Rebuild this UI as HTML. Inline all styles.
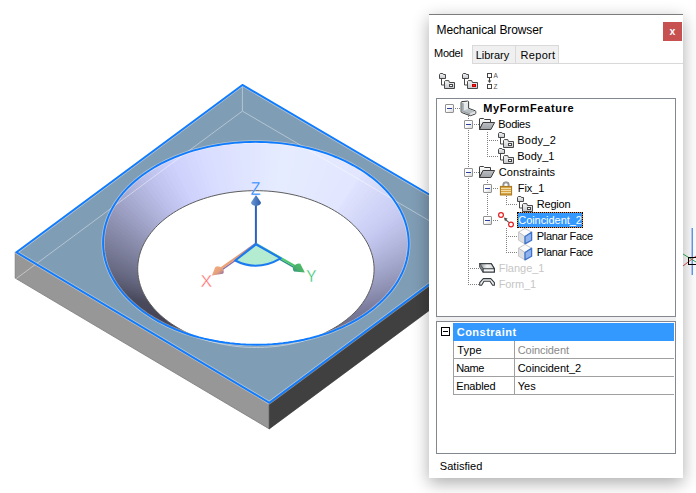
<!DOCTYPE html>
<html><head><meta charset="utf-8"><title>Mechanical Browser</title>
<style>
html,body{margin:0;padding:0;background:#fff;}
body{width:696px;height:493px;position:relative;overflow:hidden;font-family:"Liberation Sans",sans-serif;}
.scene{position:absolute;left:0;top:0;}
.panel{position:absolute;left:429px;top:14px;width:254px;height:464px;background:#fff;box-shadow:0 5px 16px rgba(0,0,0,0.33);border-top:1px solid #7c7c7c;box-sizing:border-box;}
.ui{position:absolute;left:0;top:0;width:696px;height:493px;}
.ui *{position:absolute;box-sizing:border-box;}
.t{white-space:nowrap;color:#000;line-height:16px;height:16px;font-size:11px;}
.t12{font-size:12px;}
.t.b{font-weight:bold;}
.t.w{color:#fff;}
.t.dis{color:#c6c6c6;}
.t.gr{color:#8a8a8a;}
.close{left:663px;top:22px;width:19px;height:19px;background:#c75050;color:#fff;font-weight:bold;font-size:10.5px;line-height:19px;text-align:center;}
.tabline{left:472px;top:63px;width:211px;height:1px;background:#d9d9d9;}
.tab{top:45px;height:19px;background:#f0f0f0;border:1px solid #d9d9d9;}
.treebox{left:436px;top:98px;width:240px;height:219px;border:1px solid #828790;background:#fff;}
.split{left:436px;top:317px;width:240px;height:4px;background:#f0f0f0;}
.propbox{left:436px;top:321px;width:240px;height:133px;border:1px solid #828790;background:#fff;}
.pm{width:9px;height:9px;border:1px solid #919191;background:linear-gradient(135deg,#fff 0%,#fff 40%,#d8d8d8 100%);border-radius:1px;}
.pm i{left:1px;top:3px;width:5px;height:1px;background:#2a3fa0;}
.dh{height:1px;background:repeating-linear-gradient(90deg,#808080 0,#808080 1px,transparent 1px,transparent 2px);}
.dv{width:1px;background:repeating-linear-gradient(180deg,#808080 0,#808080 1px,transparent 1px,transparent 2px);}
.ic{line-height:0;}
.ic svg{position:static;display:block;overflow:visible;}
.selbg{left:517px;top:212px;width:66px;height:16px;background:#3399ff;box-shadow:inset 0 0 0 1px #e0913a;outline:1px dotted #000;outline-offset:-1px;}
.hdrbg{left:453px;top:323px;width:221px;height:18px;background:#3399ff;}
.pbox{left:441px;top:327px;width:9px;height:9px;border:1px solid #000;background:#fff;}
.pbox i{left:1px;top:3px;width:5px;height:1px;background:#000;}
.hl{height:1px;background:#a0a0a0;left:453px;width:221px;}
.vl{width:1px;background:#a0a0a0;top:341px;height:54px;}
</style></head><body>
<svg class="scene" width="696" height="493" viewBox="0 0 696 493">
<defs><clipPath id="co"><path d="M357.74 167.87 L361.65 170.28 L365.44 172.78 L369.09 175.37 L372.60 178.04 L375.98 180.78 L379.20 183.61 L382.28 186.51 L385.20 189.47 L387.97 192.50 L390.57 195.60 L393.01 198.75 L395.28 201.96 L397.38 205.21 L399.31 208.52 L401.07 211.86 L402.65 215.24 L404.05 218.66 L405.27 222.11 L406.31 225.58 L407.16 229.08 L407.83 232.59 L408.32 236.12 L408.61 239.65 L408.73 243.19 L408.65 246.73 L408.40 250.26 L407.95 253.79 L407.32 257.30 L406.51 260.80 L405.51 264.28 L404.33 267.73 L402.97 271.14 L401.42 274.53 L399.71 277.88 L397.81 281.18 L395.75 284.44 L393.51 287.65 L391.11 290.81 L388.54 293.91 L385.81 296.94 L382.92 299.91 L379.88 302.81 L376.68 305.64 L373.34 308.40 L369.86 311.07 L366.23 313.66 L362.48 316.17 L358.59 318.58 L354.57 320.91 L350.44 323.14 L346.19 325.27 L341.84 327.31 L337.37 329.24 L332.81 331.06 L328.15 332.78 L323.41 334.39 L318.58 335.89 L313.68 337.28 L308.71 338.55 L303.67 339.71 L298.58 340.74 L293.43 341.66 L288.24 342.46 L283.00 343.14 L277.74 343.70 L272.45 344.14 L267.13 344.45 L261.81 344.64 L256.47 344.70 L251.14 344.64 L245.81 344.46 L240.50 344.16 L235.20 343.73 L229.93 343.18 L224.69 342.51 L219.48 341.72 L214.33 340.80 L209.22 339.77 L204.17 338.63 L199.18 337.36 L194.26 335.98 L189.42 334.49 L184.66 332.88 L179.98 331.17 L175.40 329.35 L170.92 327.43 L166.53 325.40 L162.26 323.27 L158.10 321.05 L154.06 318.73 L150.15 316.32 L146.36 313.82 L142.71 311.23 L139.20 308.56 L135.82 305.82 L132.60 302.99 L129.52 300.09 L126.60 297.13 L123.83 294.10 L121.23 291.00 L118.79 287.85 L116.52 284.64 L114.42 281.39 L112.49 278.08 L110.73 274.74 L109.15 271.36 L107.75 267.94 L106.53 264.49 L105.49 261.02 L104.64 257.52 L103.97 254.01 L103.48 250.48 L103.19 246.95 L103.07 243.41 L103.15 239.87 L103.40 236.34 L103.85 232.81 L104.48 229.30 L105.29 225.80 L106.29 222.32 L107.47 218.87 L108.83 215.46 L110.38 212.07 L112.09 208.72 L113.99 205.42 L116.05 202.16 L118.29 198.95 L120.69 195.79 L123.26 192.69 L125.99 189.66 L128.88 186.69 L131.92 183.79 L135.12 180.96 L138.46 178.20 L141.94 175.53 L145.57 172.94 L149.32 170.43 L153.21 168.02 L157.23 165.69 L161.36 163.46 L165.61 161.33 L169.96 159.29 L174.43 157.36 L178.99 155.54 L183.65 153.82 L188.39 152.21 L193.22 150.71 L198.12 149.32 L203.09 148.05 L208.13 146.89 L213.22 145.86 L218.37 144.94 L223.56 144.14 L228.80 143.46 L234.06 142.90 L239.35 142.46 L244.67 142.15 L249.99 141.96 L255.33 141.90 L260.66 141.96 L265.99 142.14 L271.30 142.44 L276.60 142.87 L281.87 143.42 L287.11 144.09 L292.32 144.88 L297.47 145.80 L302.58 146.83 L307.63 147.97 L312.62 149.24 L317.54 150.62 L322.38 152.11 L327.14 153.72 L331.82 155.43 L336.40 157.25 L340.88 159.17 L345.27 161.20 L349.54 163.33 L353.70 165.55Z"/></clipPath>
<linearGradient id="gx" gradientUnits="userSpaceOnUse" x1="256" y1="244" x2="218" y2="272"><stop offset="0" stop-color="#7a78c0"/><stop offset="0.4" stop-color="#e09878"/><stop offset="1" stop-color="#f4a874"/></linearGradient>
<linearGradient id="gy" gradientUnits="userSpaceOnUse" x1="256" y1="244" x2="302" y2="271"><stop offset="0" stop-color="#40a8c0"/><stop offset="0.4" stop-color="#50cc70"/><stop offset="1" stop-color="#48c068"/></linearGradient>
<linearGradient id="gz" x1="0" y1="0" x2="1" y2="0"><stop offset="0" stop-color="#6a9ad8"/><stop offset="1" stop-color="#2c5ca8"/></linearGradient>
<linearGradient id="gxa" x1="0" y1="0" x2="1" y2="1"><stop offset="0" stop-color="#f6b080"/><stop offset="0.55" stop-color="#e8a07c"/><stop offset="1" stop-color="#7868b0"/></linearGradient>
<linearGradient id="gya" x1="1" y1="0" x2="0" y2="1"><stop offset="0" stop-color="#58c070"/><stop offset="0.6" stop-color="#48b068"/><stop offset="1" stop-color="#2a8a88"/></linearGradient>
</defs>
<polygon points="15.20,251.90 269.30,402.70 269.30,428.90 15.20,278.10" fill="#979797" stroke="#787878" stroke-width="0.8" stroke-linejoin="round"/>
<polygon points="269.30,402.70 496.90,234.20 496.90,260.40 269.30,428.90" fill="#404040" stroke="#383838" stroke-width="0.6" stroke-linejoin="round"/>
<line x1="16.40" y1="278.50" x2="242.40" y2="111.10" stroke="#c4c4c4" stroke-width="1"/>
<polygon points="16.40,252.30 242.40,84.90 496.90,234.20 269.30,402.70" fill="#7f9db5"/>
<g clip-path="url(#top)">
</g>
<clipPath id="top"><polygon points="16.40,252.30 242.40,84.90 496.90,234.20 269.30,402.70"/></clipPath>
<g clip-path="url(#top)"><path d="M16.40 278.50 L242.40 111.10 L496.90 260.40 M242.40 84.90 L242.40 111.10" stroke="#b4c4d2" stroke-width="1" fill="none"/></g>
<path d="M334.66 210.76 L337.69 212.63 L340.62 214.56 L343.44 216.56 L346.16 218.62 L348.77 220.75 L351.26 222.93 L353.64 225.17 L355.90 227.47 L358.04 229.81 L360.06 232.21 L361.94 234.64 L363.70 237.12 L365.33 239.64 L366.82 242.20 L368.18 244.78 L369.40 247.40 L370.48 250.04 L371.42 252.71 L372.23 255.40 L372.89 258.10 L373.41 260.82 L373.78 263.54 L374.01 266.28 L374.10 269.02 L374.04 271.75 L373.84 274.49 L373.50 277.21 L373.01 279.93 L372.38 282.64 L371.61 285.32 L370.70 287.99 L369.64 290.64 L368.45 293.25 L367.12 295.84 L365.66 298.40 L364.06 300.92 L362.33 303.40 L360.47 305.84 L358.49 308.24 L356.37 310.59 L354.14 312.89 L351.79 315.13 L349.32 317.32 L346.73 319.45 L344.04 321.51 L341.23 323.52 L338.33 325.46 L335.32 327.33 L332.22 329.12 L329.02 330.85 L325.73 332.50 L322.36 334.07 L318.91 335.56 L315.38 336.98 L311.78 338.31 L308.11 339.55 L304.38 340.71 L300.59 341.78 L296.74 342.77 L292.85 343.66 L288.91 344.46 L284.93 345.18 L280.91 345.79 L276.86 346.32 L272.79 346.75 L268.70 347.09 L264.59 347.33 L260.47 347.48 L256.34 347.53 L252.22 347.48 L248.10 347.34 L243.99 347.11 L239.89 346.77 L235.81 346.35 L231.76 345.83 L227.74 345.22 L223.75 344.51 L219.80 343.71 L215.89 342.83 L212.03 341.85 L208.23 340.78 L204.48 339.63 L200.80 338.39 L197.18 337.06 L193.64 335.65 L190.17 334.17 L186.78 332.60 L183.48 330.95 L180.26 329.23 L177.14 327.44 L174.11 325.57 L171.18 323.64 L168.36 321.64 L165.64 319.58 L163.03 317.45 L160.54 315.27 L158.16 313.03 L155.90 310.73 L153.76 308.39 L151.74 305.99 L149.86 303.56 L148.10 301.08 L146.47 298.56 L144.98 296.00 L143.62 293.42 L142.40 290.80 L141.32 288.16 L140.38 285.49 L139.57 282.80 L138.91 280.10 L138.39 277.38 L138.02 274.66 L137.79 271.92 L137.70 269.18 L137.76 266.45 L137.96 263.71 L138.30 260.99 L138.79 258.27 L139.42 255.56 L140.19 252.88 L141.10 250.21 L142.16 247.56 L143.35 244.95 L144.68 242.36 L146.14 239.80 L147.74 237.28 L149.47 234.80 L151.33 232.36 L153.31 229.96 L155.43 227.61 L157.66 225.31 L160.01 223.07 L162.48 220.88 L165.07 218.75 L167.76 216.69 L170.57 214.68 L173.47 212.74 L176.48 210.87 L179.58 209.08 L182.78 207.35 L186.07 205.70 L189.44 204.13 L192.89 202.64 L196.42 201.22 L200.02 199.89 L203.69 198.65 L207.42 197.49 L211.21 196.42 L215.06 195.43 L218.95 194.54 L222.89 193.74 L226.87 193.02 L230.89 192.41 L234.94 191.88 L239.01 191.45 L243.10 191.11 L247.21 190.87 L251.33 190.72 L255.46 190.67 L259.58 190.72 L263.70 190.86 L267.81 191.09 L271.91 191.43 L275.99 191.85 L280.04 192.37 L284.06 192.98 L288.05 193.69 L292.00 194.49 L295.91 195.37 L299.77 196.35 L303.57 197.42 L307.32 198.57 L311.00 199.81 L314.62 201.14 L318.16 202.55 L321.63 204.03 L325.02 205.60 L328.32 207.25 L331.54 208.97Z" fill="none" stroke="#b9c9d6" stroke-width="1"/>
<g clip-path="url(#co)" shape-rendering="geometricPrecision"><polygon points="357.74,167.87 367.28,174.06 333.43,220.91 326.78,216.59" fill="rgb(225,229,255)"/><polygon points="361.65,170.28 370.86,176.69 335.92,222.74 329.51,218.27" fill="rgb(223,227,254)"/><polygon points="365.44,172.78 374.31,179.40 338.32,224.62 332.15,220.01" fill="rgb(221,225,253)"/><polygon points="369.09,175.37 377.61,182.19 340.62,226.56 334.69,221.81" fill="rgb(219,223,252)"/><polygon points="372.60,178.04 380.76,185.05 342.81,228.55 337.13,223.67" fill="rgb(218,222,251)"/><polygon points="375.98,180.78 383.76,187.98 344.90,230.59 339.48,225.58" fill="rgb(216,220,250)"/><polygon points="379.20,183.61 386.60,190.98 346.88,232.68 341.73,227.55" fill="rgb(214,218,249)"/><polygon points="382.28,186.51 389.29,194.04 348.75,234.81 343.87,229.57" fill="rgb(212,216,248)"/><polygon points="385.20,189.47 391.81,197.17 350.50,236.99 345.90,231.63" fill="rgb(210,214,248)"/><polygon points="387.97,192.50 394.17,200.35 352.14,239.20 347.83,233.74" fill="rgb(208,212,247)"/><polygon points="390.57,195.60 396.35,203.58 353.67,241.45 349.64,235.90" fill="rgb(206,210,246)"/><polygon points="393.01,198.75 398.37,206.86 355.07,243.73 351.34,238.09" fill="rgb(205,209,245)"/><polygon points="395.28,201.96 400.21,210.18 356.35,246.05 352.92,240.32" fill="rgb(203,207,244)"/><polygon points="397.38,205.21 401.88,213.55 357.51,248.39 354.38,242.59" fill="rgb(201,205,243)"/><polygon points="399.31,208.52 403.37,216.95 358.55,250.76 355.73,244.89" fill="rgb(199,203,242)"/><polygon points="401.07,211.86 404.68,220.38 359.46,253.15 356.95,247.22" fill="rgb(197,201,241)"/><polygon points="402.65,215.24 405.81,223.84 360.25,255.56 358.05,249.57" fill="rgb(194,198,238)"/><polygon points="404.05,218.66 406.76,227.33 360.91,257.98 359.02,251.95" fill="rgb(191,195,235)"/><polygon points="405.27,222.11 407.52,230.83 361.44,260.42 359.87,254.35" fill="rgb(189,193,232)"/><polygon points="406.31,225.58 408.10,234.35 361.84,262.87 360.59,256.77" fill="rgb(186,190,229)"/><polygon points="407.16,229.08 408.49,237.88 362.11,265.33 361.19,259.20" fill="rgb(183,187,226)"/><polygon points="407.83,232.59 408.69,241.42 362.26,267.79 361.65,261.65" fill="rgb(181,185,223)"/><polygon points="408.32,236.12 408.71,244.96 362.27,270.26 361.99,264.10" fill="rgb(178,182,220)"/><polygon points="408.61,239.65 408.55,248.50 362.15,272.72 362.20,266.56" fill="rgb(175,179,217)"/><polygon points="408.73,243.19 408.20,252.03 361.91,275.18 362.28,269.02" fill="rgb(173,177,214)"/><polygon points="408.65,246.73 407.66,255.55 361.53,277.63 362.23,271.49" fill="rgb(170,174,211)"/><polygon points="408.40,250.26 406.94,259.05 361.03,280.07 362.05,273.95" fill="rgb(167,171,208)"/><polygon points="407.95,253.79 406.03,262.54 360.40,282.49 361.74,276.40" fill="rgb(165,169,205)"/><polygon points="407.32,257.30 404.94,266.00 359.64,284.90 361.30,278.85" fill="rgb(162,166,202)"/><polygon points="406.51,260.80 403.67,269.44 358.76,287.29 360.73,281.28" fill="rgb(159,163,199)"/><polygon points="405.51,264.28 402.22,272.84 357.75,289.66 360.04,283.70" fill="rgb(157,161,196)"/><polygon points="404.33,267.73 400.59,276.21 356.61,292.01 359.22,286.10" fill="rgb(154,158,193)"/><polygon points="402.97,271.14 398.78,279.54 355.36,294.32 358.27,288.48" fill="rgb(152,155,190)"/><polygon points="401.42,274.53 396.80,282.82 353.98,296.61 357.20,290.84" fill="rgb(149,152,187)"/><polygon points="399.71,277.88 394.65,286.06 352.48,298.86 356.00,293.17" fill="rgb(147,149,184)"/><polygon points="397.81,281.18 392.33,289.24 350.87,301.08 354.68,295.47" fill="rgb(144,147,181)"/><polygon points="395.75,284.44 389.84,292.37 349.13,303.25 353.24,297.74" fill="rgb(142,144,178)"/><polygon points="393.51,287.65 387.19,295.43 347.29,305.39 351.69,299.97" fill="rgb(139,141,175)"/><polygon points="391.11,290.81 384.38,298.44 345.33,307.48 350.01,302.17" fill="rgb(136,138,172)"/><polygon points="388.54,293.91 381.42,301.37 343.27,309.52 348.23,304.33" fill="rgb(134,135,169)"/><polygon points="385.81,296.94 378.30,304.24 341.10,311.52 346.33,306.44" fill="rgb(131,133,166)"/><polygon points="382.92,299.91 375.03,307.03 338.82,313.46 344.32,308.51" fill="rgb(129,130,163)"/><polygon points="379.88,302.81 371.62,309.74 336.45,315.35 342.20,310.53" fill="rgb(126,127,160)"/><polygon points="376.68,305.64 368.06,312.38 333.97,317.18 339.97,312.50" fill="rgb(124,124,157)"/><polygon points="373.34,308.40 364.37,314.93 331.40,318.96 337.65,314.41" fill="rgb(121,121,154)"/><polygon points="369.86,311.07 360.55,317.39 328.74,320.67 335.22,316.27" fill="rgb(119,119,151)"/><polygon points="366.23,313.66 356.60,319.76 325.99,322.32 332.70,318.08" fill="rgb(118,118,149)"/><polygon points="362.48,316.17 352.52,322.04 323.16,323.91 330.08,319.82" fill="rgb(116,116,147)"/><polygon points="358.59,318.58 348.33,324.22 320.24,325.42 327.38,321.50" fill="rgb(114,114,145)"/><polygon points="354.57,320.91 344.03,326.30 317.24,326.87 324.58,323.12" fill="rgb(113,113,143)"/><polygon points="350.44,323.14 339.62,328.28 314.17,328.25 321.71,324.67" fill="rgb(111,111,141)"/><polygon points="346.19,325.27 335.10,330.16 311.03,329.56 318.75,326.16" fill="rgb(110,110,139)"/><polygon points="341.84,327.31 330.49,331.94 307.82,330.80 315.72,327.57" fill="rgb(108,108,137)"/><polygon points="337.37,329.24 325.79,333.60 304.55,331.96 312.61,328.92" fill="rgb(106,106,135)"/><polygon points="332.81,331.06 321.01,335.16 301.22,333.04 309.44,330.19" fill="rgb(105,105,133)"/><polygon points="328.15,332.78 316.14,336.60 297.83,334.04 306.19,331.39" fill="rgb(103,103,131)"/><polygon points="323.41,334.39 311.20,337.93 294.40,334.97 302.89,332.51" fill="rgb(102,102,129)"/><polygon points="318.58,335.89 306.20,339.14 290.91,335.81 299.53,333.55" fill="rgb(100,100,127)"/><polygon points="313.68,337.28 301.13,340.24 287.38,336.58 296.12,334.52" fill="rgb(98,98,125)"/><polygon points="308.71,338.55 296.01,341.22 283.82,337.26 292.66,335.40" fill="rgb(97,97,123)"/><polygon points="303.67,339.71 290.84,342.08 280.22,337.86 289.15,336.21" fill="rgb(95,95,121)"/><polygon points="298.58,340.74 285.62,342.82 276.59,338.37 285.61,336.93" fill="rgb(94,94,120)"/><polygon points="293.43,341.66 280.37,343.44 272.94,338.80 282.02,337.57" fill="rgb(93,93,118)"/><polygon points="288.24,342.46 275.09,343.93 269.26,339.15 278.41,338.13" fill="rgb(92,92,117)"/><polygon points="283.00,343.14 269.79,344.31 265.57,339.41 274.77,338.60" fill="rgb(91,91,115)"/><polygon points="277.74,343.70 264.47,344.56 261.87,339.58 271.10,338.99" fill="rgb(90,90,114)"/><polygon points="272.45,344.14 259.14,344.69 258.16,339.67 267.42,339.29" fill="rgb(89,89,112)"/><polygon points="267.13,344.45 253.81,344.69 254.44,339.67 263.72,339.51" fill="rgb(88,88,111)"/><polygon points="261.81,344.64 248.47,344.57 250.73,339.59 260.01,339.64" fill="rgb(87,87,110)"/><polygon points="256.47,344.70 243.15,344.33 247.03,339.42 256.30,339.68" fill="rgb(86,86,108)"/><polygon points="251.14,344.64 237.84,343.96 243.33,339.17 252.59,339.64" fill="rgb(85,85,107)"/><polygon points="245.81,344.46 232.56,343.47 239.65,338.83 248.88,339.52" fill="rgb(84,84,105)"/><polygon points="240.50,344.16 227.30,342.86 235.99,338.40 245.18,339.31" fill="rgb(83,83,104)"/><polygon points="235.20,343.73 222.08,342.13 232.36,337.89 241.49,339.01" fill="rgb(82,82,102)"/><polygon points="229.93,343.18 216.90,341.28 228.75,337.30 237.82,338.62" fill="rgb(81,81,101)"/><polygon points="224.69,342.51 211.77,340.30 225.18,336.62 234.17,338.16" fill="rgb(80,80,100)"/><polygon points="219.48,341.72 206.69,339.21 221.64,335.86 230.55,337.61" fill="rgb(79,79,99)"/><polygon points="214.33,340.80 201.67,338.01 218.15,335.02 226.96,336.97" fill="rgb(78,78,98)"/><polygon points="209.22,339.77 196.71,336.68 214.70,334.10 223.41,336.25" fill="rgb(78,78,97)"/><polygon points="204.17,338.63 191.83,335.25 211.30,333.10 219.89,335.45" fill="rgb(77,77,96)"/><polygon points="199.18,337.36 187.03,333.70 207.96,332.03 216.42,334.57" fill="rgb(76,76,96)"/><polygon points="194.26,335.98 182.31,332.04 204.68,330.87 213.00,333.61" fill="rgb(76,76,95)"/><polygon points="189.42,334.49 177.68,330.28 201.45,329.64 209.63,332.57" fill="rgb(75,75,94)"/><polygon points="184.66,332.88 173.14,328.40 198.30,328.34 206.31,331.46" fill="rgb(74,74,93)"/><polygon points="179.98,331.17 168.71,326.43 195.21,326.96 203.06,330.27" fill="rgb(74,74,92)"/><polygon points="175.40,329.35 164.38,324.35 192.20,325.52 199.87,329.00" fill="rgb(73,73,92)"/><polygon points="170.92,327.43 160.17,322.17 189.26,324.00 196.74,327.66" fill="rgb(72,72,91)"/><polygon points="166.53,325.40 156.07,319.90 186.41,322.42 193.69,326.25" fill="rgb(72,72,90)"/><polygon points="162.26,323.27 152.09,317.54 183.64,320.77 190.72,324.77" fill="rgb(71,71,89)"/><polygon points="158.10,321.05 148.24,315.08 180.96,319.06 187.83,323.22" fill="rgb(70,70,88)"/><polygon points="154.06,318.73 144.52,312.54 178.37,317.29 185.02,321.61" fill="rgb(70,70,88)"/><polygon points="150.15,316.32 140.94,309.91 175.88,315.46 182.29,319.93" fill="rgb(71,71,89)"/><polygon points="146.36,313.82 137.49,307.20 173.48,313.58 179.65,318.19" fill="rgb(71,71,89)"/><polygon points="142.71,311.23 134.19,304.41 171.18,311.64 177.11,316.39" fill="rgb(72,72,90)"/><polygon points="139.20,308.56 131.04,301.55 168.99,309.65 174.67,314.53" fill="rgb(72,72,90)"/><polygon points="135.82,305.82 128.04,298.62 166.90,307.61 172.32,312.62" fill="rgb(73,73,91)"/><polygon points="132.60,302.99 125.20,295.62 164.92,305.52 170.07,310.65" fill="rgb(73,73,91)"/><polygon points="129.52,300.09 122.51,292.56 163.05,303.39 167.93,308.63" fill="rgb(74,74,92)"/><polygon points="126.60,297.13 119.99,289.43 161.30,301.21 165.90,306.57" fill="rgb(77,77,96)"/><polygon points="123.83,294.10 117.63,286.25 159.66,299.00 163.97,304.46" fill="rgb(80,81,101)"/><polygon points="121.23,291.00 115.45,283.02 158.13,296.75 162.16,302.30" fill="rgb(84,84,105)"/><polygon points="118.79,287.85 113.43,279.74 156.73,294.47 160.46,300.11" fill="rgb(87,88,109)"/><polygon points="116.52,284.64 111.59,276.42 155.45,292.15 158.88,297.88" fill="rgb(90,91,113)"/><polygon points="114.42,281.39 109.92,273.05 154.29,289.81 157.42,295.61" fill="rgb(93,95,118)"/><polygon points="112.49,278.08 108.43,269.65 153.25,287.44 156.07,293.31" fill="rgb(96,98,122)"/><polygon points="110.73,274.74 107.12,266.22 152.34,285.05 154.85,290.98" fill="rgb(99,101,126)"/><polygon points="109.15,271.36 105.99,262.76 151.55,282.64 153.75,288.63" fill="rgb(102,104,129)"/><polygon points="107.75,267.94 105.04,259.27 150.89,280.22 152.78,286.25" fill="rgb(105,107,132)"/><polygon points="106.53,264.49 104.28,255.77 150.36,277.78 151.93,283.85" fill="rgb(107,110,135)"/><polygon points="105.49,261.02 103.70,252.25 149.96,275.33 151.21,281.43" fill="rgb(110,112,138)"/><polygon points="104.64,257.52 103.31,248.72 149.69,272.87 150.61,279.00" fill="rgb(113,115,142)"/><polygon points="103.97,254.01 103.11,245.18 149.54,270.41 150.15,276.55" fill="rgb(115,118,145)"/><polygon points="103.48,250.48 103.09,241.64 149.53,267.94 149.81,274.10" fill="rgb(118,120,148)"/><polygon points="103.19,246.95 103.25,238.10 149.65,265.48 149.60,271.64" fill="rgb(121,123,151)"/><polygon points="103.07,243.41 103.60,234.57 149.89,263.02 149.52,269.18" fill="rgb(123,126,154)"/><polygon points="103.15,239.87 104.14,231.05 150.27,260.57 149.57,266.71" fill="rgb(126,129,158)"/><polygon points="103.40,236.34 104.86,227.55 150.77,258.13 149.75,264.25" fill="rgb(129,131,161)"/><polygon points="103.85,232.81 105.77,224.06 151.40,255.71 150.06,261.80" fill="rgb(131,134,164)"/><polygon points="104.48,229.30 106.86,220.60 152.16,253.30 150.50,259.35" fill="rgb(134,137,167)"/><polygon points="105.29,225.80 108.13,217.16 153.04,250.91 151.07,256.92" fill="rgb(137,140,170)"/><polygon points="106.29,222.32 109.58,213.76 154.05,248.54 151.76,254.50" fill="rgb(140,143,174)"/><polygon points="107.47,218.87 111.21,210.39 155.19,246.19 152.58,252.10" fill="rgb(143,146,178)"/><polygon points="108.83,215.46 113.02,207.06 156.44,243.88 153.53,249.72" fill="rgb(146,149,182)"/><polygon points="110.38,212.07 115.00,203.78 157.82,241.59 154.60,247.36" fill="rgb(149,152,186)"/><polygon points="112.09,208.72 117.15,200.54 159.32,239.34 155.80,245.03" fill="rgb(152,156,190)"/><polygon points="113.99,205.42 119.47,197.36 160.93,237.12 157.12,242.73" fill="rgb(156,159,194)"/><polygon points="116.05,202.16 121.96,194.23 162.67,234.95 158.56,240.46" fill="rgb(159,162,198)"/><polygon points="118.29,198.95 124.61,191.17 164.51,232.81 160.11,238.23" fill="rgb(162,166,202)"/><polygon points="120.69,195.79 127.42,188.16 166.47,230.72 161.79,236.03" fill="rgb(165,169,206)"/><polygon points="123.26,192.69 130.38,185.23 168.53,228.68 163.57,233.87" fill="rgb(168,172,210)"/><polygon points="125.99,189.66 133.50,182.36 170.70,226.68 165.47,231.76" fill="rgb(172,175,214)"/><polygon points="128.88,186.69 136.77,179.57 172.98,224.74 167.48,229.69" fill="rgb(175,179,218)"/><polygon points="131.92,183.79 140.18,176.86 175.35,222.85 169.60,227.67" fill="rgb(178,182,222)"/><polygon points="135.12,180.96 143.74,174.22 177.83,221.02 171.83,225.70" fill="rgb(181,185,226)"/><polygon points="138.46,178.20 147.43,171.67 180.40,219.24 174.15,223.79" fill="rgb(184,188,230)"/><polygon points="141.94,175.53 151.25,169.21 183.06,217.53 176.58,221.93" fill="rgb(187,191,233)"/><polygon points="145.57,172.94 155.20,166.84 185.81,215.88 179.10,220.12" fill="rgb(190,194,236)"/><polygon points="149.32,170.43 159.28,164.56 188.64,214.29 181.72,218.38" fill="rgb(193,197,239)"/><polygon points="153.21,168.02 163.47,162.38 191.56,212.78 184.42,216.70" fill="rgb(195,199,241)"/><polygon points="157.23,165.69 167.77,160.30 194.56,211.33 187.22,215.08" fill="rgb(198,202,244)"/><polygon points="161.36,163.46 172.18,158.32 197.63,209.95 190.09,213.53" fill="rgb(201,205,247)"/><polygon points="165.61,161.33 176.70,156.44 200.77,208.64 193.05,212.04" fill="rgb(203,207,249)"/><polygon points="169.96,159.29 181.31,154.66 203.98,207.40 196.08,210.63" fill="rgb(206,210,252)"/><polygon points="174.43,157.36 186.01,153.00 207.25,206.24 199.19,209.28" fill="rgb(208,212,252)"/><polygon points="178.99,155.54 190.79,151.44 210.58,205.16 202.36,208.01" fill="rgb(209,213,253)"/><polygon points="183.65,153.82 195.66,150.00 213.97,204.16 205.61,206.81" fill="rgb(211,215,253)"/><polygon points="188.39,152.21 200.60,148.67 217.40,203.23 208.91,205.69" fill="rgb(212,216,254)"/><polygon points="193.22,150.71 205.60,147.46 220.89,202.39 212.27,204.65" fill="rgb(214,218,254)"/><polygon points="198.12,149.32 210.67,146.36 224.42,201.62 215.68,203.68" fill="rgb(216,220,254)"/><polygon points="203.09,148.05 215.79,145.38 227.98,200.94 219.14,202.80" fill="rgb(217,221,255)"/><polygon points="208.13,146.89 220.96,144.52 231.58,200.34 222.65,201.99" fill="rgb(218,222,255)"/><polygon points="213.22,145.86 226.18,143.78 235.21,199.83 226.19,201.27" fill="rgb(219,223,255)"/><polygon points="218.37,144.94 231.43,143.16 238.86,199.40 229.78,200.63" fill="rgb(220,224,255)"/><polygon points="223.56,144.14 236.71,142.67 242.54,199.05 233.39,200.07" fill="rgb(221,225,255)"/><polygon points="228.80,143.46 242.01,142.29 246.23,198.79 237.03,199.60" fill="rgb(222,226,255)"/><polygon points="234.06,142.90 247.33,142.04 249.93,198.62 240.70,199.21" fill="rgb(222,227,255)"/><polygon points="239.35,142.46 252.66,141.91 253.64,198.53 244.38,198.91" fill="rgb(223,228,255)"/><polygon points="244.67,142.15 257.99,141.91 257.36,198.53 248.08,198.69" fill="rgb(224,229,255)"/><polygon points="249.99,141.96 263.33,142.03 261.07,198.61 251.79,198.56" fill="rgb(225,230,255)"/><polygon points="255.33,141.90 268.65,142.27 264.77,198.78 255.50,198.52" fill="rgb(226,231,255)"/><polygon points="260.66,141.96 273.96,142.64 268.47,199.03 259.21,198.56" fill="rgb(226,232,255)"/><polygon points="265.99,142.14 279.24,143.13 272.15,199.37 262.92,198.68" fill="rgb(227,233,255)"/><polygon points="271.30,142.44 284.50,143.74 275.81,199.80 266.62,198.89" fill="rgb(228,234,255)"/><polygon points="276.60,142.87 289.72,144.47 279.44,200.31 270.31,199.19" fill="rgb(229,235,255)"/><polygon points="281.87,143.42 294.90,145.32 283.05,200.90 273.98,199.58" fill="rgb(230,236,255)"/><polygon points="287.11,144.09 300.03,146.30 286.62,201.58 277.63,200.04" fill="rgb(230,236,255)"/><polygon points="292.32,144.88 305.11,147.39 290.16,202.34 281.25,200.59" fill="rgb(230,235,255)"/><polygon points="297.47,145.80 310.13,148.59 293.65,203.18 284.84,201.23" fill="rgb(229,235,255)"/><polygon points="302.58,146.83 315.09,149.92 297.10,204.10 288.39,201.95" fill="rgb(229,235,255)"/><polygon points="307.63,147.97 319.97,151.35 300.50,205.10 291.91,202.75" fill="rgb(229,234,255)"/><polygon points="312.62,149.24 324.77,152.90 303.84,206.17 295.38,203.63" fill="rgb(229,234,255)"/><polygon points="317.54,150.62 329.49,154.56 307.12,207.33 298.80,204.59" fill="rgb(228,233,255)"/><polygon points="322.38,152.11 334.12,156.32 310.35,208.56 302.17,205.63" fill="rgb(228,233,255)"/><polygon points="327.14,153.72 338.66,158.20 313.50,209.86 305.49,206.74" fill="rgb(228,233,255)"/><polygon points="331.82,155.43 343.09,160.17 316.59,211.24 308.74,207.93" fill="rgb(227,232,255)"/><polygon points="336.40,157.25 347.42,162.25 319.60,212.68 311.93,209.20" fill="rgb(227,232,255)"/><polygon points="340.88,159.17 351.63,164.43 322.54,214.20 315.06,210.54" fill="rgb(227,231,255)"/><polygon points="345.27,161.20 355.73,166.70 325.39,215.78 318.11,211.95" fill="rgb(227,231,255)"/><polygon points="349.54,163.33 359.71,169.06 328.16,217.43 321.08,213.43" fill="rgb(226,231,255)"/><polygon points="353.70,165.55 363.56,171.52 330.84,219.14 323.97,214.98" fill="rgb(226,230,255)"/>
<path d="M16.40 278.50 L242.40 111.10 L496.90 260.40" stroke="#ffffff" stroke-opacity="0.45" stroke-width="1" fill="none"/>
<path d="M334.66 210.76 L337.69 212.63 L340.62 214.56 L343.44 216.56 L346.16 218.62 L348.77 220.75 L351.26 222.93 L353.64 225.17 L355.90 227.47 L358.04 229.81 L360.06 232.21 L361.94 234.64 L363.70 237.12 L365.33 239.64 L366.82 242.20 L368.18 244.78 L369.40 247.40 L370.48 250.04 L371.42 252.71 L372.23 255.40 L372.89 258.10 L373.41 260.82 L373.78 263.54 L374.01 266.28 L374.10 269.02 L374.04 271.75 L373.84 274.49 L373.50 277.21 L373.01 279.93 L372.38 282.64 L371.61 285.32 L370.70 287.99 L369.64 290.64 L368.45 293.25 L367.12 295.84 L365.66 298.40 L364.06 300.92 L362.33 303.40 L360.47 305.84 L358.49 308.24 L356.37 310.59 L354.14 312.89 L351.79 315.13 L349.32 317.32 L346.73 319.45 L344.04 321.51 L341.23 323.52 L338.33 325.46 L335.32 327.33 L332.22 329.12 L329.02 330.85 L325.73 332.50 L322.36 334.07 L318.91 335.56 L315.38 336.98 L311.78 338.31 L308.11 339.55 L304.38 340.71 L300.59 341.78 L296.74 342.77 L292.85 343.66 L288.91 344.46 L284.93 345.18 L280.91 345.79 L276.86 346.32 L272.79 346.75 L268.70 347.09 L264.59 347.33 L260.47 347.48 L256.34 347.53 L252.22 347.48 L248.10 347.34 L243.99 347.11 L239.89 346.77 L235.81 346.35 L231.76 345.83 L227.74 345.22 L223.75 344.51 L219.80 343.71 L215.89 342.83 L212.03 341.85 L208.23 340.78 L204.48 339.63 L200.80 338.39 L197.18 337.06 L193.64 335.65 L190.17 334.17 L186.78 332.60 L183.48 330.95 L180.26 329.23 L177.14 327.44 L174.11 325.57 L171.18 323.64 L168.36 321.64 L165.64 319.58 L163.03 317.45 L160.54 315.27 L158.16 313.03 L155.90 310.73 L153.76 308.39 L151.74 305.99 L149.86 303.56 L148.10 301.08 L146.47 298.56 L144.98 296.00 L143.62 293.42 L142.40 290.80 L141.32 288.16 L140.38 285.49 L139.57 282.80 L138.91 280.10 L138.39 277.38 L138.02 274.66 L137.79 271.92 L137.70 269.18 L137.76 266.45 L137.96 263.71 L138.30 260.99 L138.79 258.27 L139.42 255.56 L140.19 252.88 L141.10 250.21 L142.16 247.56 L143.35 244.95 L144.68 242.36 L146.14 239.80 L147.74 237.28 L149.47 234.80 L151.33 232.36 L153.31 229.96 L155.43 227.61 L157.66 225.31 L160.01 223.07 L162.48 220.88 L165.07 218.75 L167.76 216.69 L170.57 214.68 L173.47 212.74 L176.48 210.87 L179.58 209.08 L182.78 207.35 L186.07 205.70 L189.44 204.13 L192.89 202.64 L196.42 201.22 L200.02 199.89 L203.69 198.65 L207.42 197.49 L211.21 196.42 L215.06 195.43 L218.95 194.54 L222.89 193.74 L226.87 193.02 L230.89 192.41 L234.94 191.88 L239.01 191.45 L243.10 191.11 L247.21 190.87 L251.33 190.72 L255.46 190.67 L259.58 190.72 L263.70 190.86 L267.81 191.09 L271.91 191.43 L275.99 191.85 L280.04 192.37 L284.06 192.98 L288.05 193.69 L292.00 194.49 L295.91 195.37 L299.77 196.35 L303.57 197.42 L307.32 198.57 L311.00 199.81 L314.62 201.14 L318.16 202.55 L321.63 204.03 L325.02 205.60 L328.32 207.25 L331.54 208.97Z" fill="#ffffff" stroke="#5c5c5c" stroke-width="1"/>
</g>
<path d="M357.74 167.87 L361.65 170.28 L365.44 172.78 L369.09 175.37 L372.60 178.04 L375.98 180.78 L379.20 183.61 L382.28 186.51 L385.20 189.47 L387.97 192.50 L390.57 195.60 L393.01 198.75 L395.28 201.96 L397.38 205.21 L399.31 208.52 L401.07 211.86 L402.65 215.24 L404.05 218.66 L405.27 222.11 L406.31 225.58 L407.16 229.08 L407.83 232.59 L408.32 236.12 L408.61 239.65 L408.73 243.19 L408.65 246.73 L408.40 250.26 L407.95 253.79 L407.32 257.30 L406.51 260.80 L405.51 264.28 L404.33 267.73 L402.97 271.14 L401.42 274.53 L399.71 277.88 L397.81 281.18 L395.75 284.44 L393.51 287.65 L391.11 290.81 L388.54 293.91 L385.81 296.94 L382.92 299.91 L379.88 302.81 L376.68 305.64 L373.34 308.40 L369.86 311.07 L366.23 313.66 L362.48 316.17 L358.59 318.58 L354.57 320.91 L350.44 323.14 L346.19 325.27 L341.84 327.31 L337.37 329.24 L332.81 331.06 L328.15 332.78 L323.41 334.39 L318.58 335.89 L313.68 337.28 L308.71 338.55 L303.67 339.71 L298.58 340.74 L293.43 341.66 L288.24 342.46 L283.00 343.14 L277.74 343.70 L272.45 344.14 L267.13 344.45 L261.81 344.64 L256.47 344.70 L251.14 344.64 L245.81 344.46 L240.50 344.16 L235.20 343.73 L229.93 343.18 L224.69 342.51 L219.48 341.72 L214.33 340.80 L209.22 339.77 L204.17 338.63 L199.18 337.36 L194.26 335.98 L189.42 334.49 L184.66 332.88 L179.98 331.17 L175.40 329.35 L170.92 327.43 L166.53 325.40 L162.26 323.27 L158.10 321.05 L154.06 318.73 L150.15 316.32 L146.36 313.82 L142.71 311.23 L139.20 308.56 L135.82 305.82 L132.60 302.99 L129.52 300.09 L126.60 297.13 L123.83 294.10 L121.23 291.00 L118.79 287.85 L116.52 284.64 L114.42 281.39 L112.49 278.08 L110.73 274.74 L109.15 271.36 L107.75 267.94 L106.53 264.49 L105.49 261.02 L104.64 257.52 L103.97 254.01 L103.48 250.48 L103.19 246.95 L103.07 243.41 L103.15 239.87 L103.40 236.34 L103.85 232.81 L104.48 229.30 L105.29 225.80 L106.29 222.32 L107.47 218.87 L108.83 215.46 L110.38 212.07 L112.09 208.72 L113.99 205.42 L116.05 202.16 L118.29 198.95 L120.69 195.79 L123.26 192.69 L125.99 189.66 L128.88 186.69 L131.92 183.79 L135.12 180.96 L138.46 178.20 L141.94 175.53 L145.57 172.94 L149.32 170.43 L153.21 168.02 L157.23 165.69 L161.36 163.46 L165.61 161.33 L169.96 159.29 L174.43 157.36 L178.99 155.54 L183.65 153.82 L188.39 152.21 L193.22 150.71 L198.12 149.32 L203.09 148.05 L208.13 146.89 L213.22 145.86 L218.37 144.94 L223.56 144.14 L228.80 143.46 L234.06 142.90 L239.35 142.46 L244.67 142.15 L249.99 141.96 L255.33 141.90 L260.66 141.96 L265.99 142.14 L271.30 142.44 L276.60 142.87 L281.87 143.42 L287.11 144.09 L292.32 144.88 L297.47 145.80 L302.58 146.83 L307.63 147.97 L312.62 149.24 L317.54 150.62 L322.38 152.11 L327.14 153.72 L331.82 155.43 L336.40 157.25 L340.88 159.17 L345.27 161.20 L349.54 163.33 L353.70 165.55Z" fill="none" stroke="#ffffff" stroke-opacity="0.4" stroke-width="3.4"/>
<polygon points="16.40,252.30 242.40,84.90 496.90,234.20 269.30,402.70" fill="none" stroke="#ffffff" stroke-opacity="0.4" stroke-width="3.4" stroke-linejoin="round"/>
<path d="M357.74 167.87 L361.65 170.28 L365.44 172.78 L369.09 175.37 L372.60 178.04 L375.98 180.78 L379.20 183.61 L382.28 186.51 L385.20 189.47 L387.97 192.50 L390.57 195.60 L393.01 198.75 L395.28 201.96 L397.38 205.21 L399.31 208.52 L401.07 211.86 L402.65 215.24 L404.05 218.66 L405.27 222.11 L406.31 225.58 L407.16 229.08 L407.83 232.59 L408.32 236.12 L408.61 239.65 L408.73 243.19 L408.65 246.73 L408.40 250.26 L407.95 253.79 L407.32 257.30 L406.51 260.80 L405.51 264.28 L404.33 267.73 L402.97 271.14 L401.42 274.53 L399.71 277.88 L397.81 281.18 L395.75 284.44 L393.51 287.65 L391.11 290.81 L388.54 293.91 L385.81 296.94 L382.92 299.91 L379.88 302.81 L376.68 305.64 L373.34 308.40 L369.86 311.07 L366.23 313.66 L362.48 316.17 L358.59 318.58 L354.57 320.91 L350.44 323.14 L346.19 325.27 L341.84 327.31 L337.37 329.24 L332.81 331.06 L328.15 332.78 L323.41 334.39 L318.58 335.89 L313.68 337.28 L308.71 338.55 L303.67 339.71 L298.58 340.74 L293.43 341.66 L288.24 342.46 L283.00 343.14 L277.74 343.70 L272.45 344.14 L267.13 344.45 L261.81 344.64 L256.47 344.70 L251.14 344.64 L245.81 344.46 L240.50 344.16 L235.20 343.73 L229.93 343.18 L224.69 342.51 L219.48 341.72 L214.33 340.80 L209.22 339.77 L204.17 338.63 L199.18 337.36 L194.26 335.98 L189.42 334.49 L184.66 332.88 L179.98 331.17 L175.40 329.35 L170.92 327.43 L166.53 325.40 L162.26 323.27 L158.10 321.05 L154.06 318.73 L150.15 316.32 L146.36 313.82 L142.71 311.23 L139.20 308.56 L135.82 305.82 L132.60 302.99 L129.52 300.09 L126.60 297.13 L123.83 294.10 L121.23 291.00 L118.79 287.85 L116.52 284.64 L114.42 281.39 L112.49 278.08 L110.73 274.74 L109.15 271.36 L107.75 267.94 L106.53 264.49 L105.49 261.02 L104.64 257.52 L103.97 254.01 L103.48 250.48 L103.19 246.95 L103.07 243.41 L103.15 239.87 L103.40 236.34 L103.85 232.81 L104.48 229.30 L105.29 225.80 L106.29 222.32 L107.47 218.87 L108.83 215.46 L110.38 212.07 L112.09 208.72 L113.99 205.42 L116.05 202.16 L118.29 198.95 L120.69 195.79 L123.26 192.69 L125.99 189.66 L128.88 186.69 L131.92 183.79 L135.12 180.96 L138.46 178.20 L141.94 175.53 L145.57 172.94 L149.32 170.43 L153.21 168.02 L157.23 165.69 L161.36 163.46 L165.61 161.33 L169.96 159.29 L174.43 157.36 L178.99 155.54 L183.65 153.82 L188.39 152.21 L193.22 150.71 L198.12 149.32 L203.09 148.05 L208.13 146.89 L213.22 145.86 L218.37 144.94 L223.56 144.14 L228.80 143.46 L234.06 142.90 L239.35 142.46 L244.67 142.15 L249.99 141.96 L255.33 141.90 L260.66 141.96 L265.99 142.14 L271.30 142.44 L276.60 142.87 L281.87 143.42 L287.11 144.09 L292.32 144.88 L297.47 145.80 L302.58 146.83 L307.63 147.97 L312.62 149.24 L317.54 150.62 L322.38 152.11 L327.14 153.72 L331.82 155.43 L336.40 157.25 L340.88 159.17 L345.27 161.20 L349.54 163.33 L353.70 165.55Z" fill="none" stroke="#0f7bff" stroke-width="1.9"/>
<polygon points="16.40,252.30 242.40,84.90 496.90,234.20 269.30,402.70" fill="none" stroke="#0f7bff" stroke-width="1.9" stroke-linejoin="round"/>
<g>
<line x1="255.9" y1="244.4" x2="255.9" y2="204" stroke="#2a62bc" stroke-width="2"/>
<path d="M256 195.1 L261 202.6 Q261 205.6 256 206 Q251 205.6 251 202.6 Z" fill="url(#gz)"/>
<line x1="256.6" y1="245.4" x2="219.7" y2="271.4" stroke="#8070b4" stroke-width="1.4"/>
<line x1="255.6" y1="244.0" x2="218.7" y2="270.0" stroke="url(#gx)" stroke-width="2.2"/>
<path d="M211.9 275.6 L215.2 267.2 Q217.8 264.8 222 267.8 Q225 271.4 223 273.8 Z" fill="url(#gxa)"/>
<line x1="255.4" y1="245.4" x2="296.5" y2="268.8" stroke="#2c8c8c" stroke-width="1.4"/>
<line x1="256.2" y1="244.0" x2="297.3" y2="267.4" stroke="url(#gy)" stroke-width="2.2"/>
<path d="M304.8 272.6 L294 271.4 Q291.6 269.2 294.2 265.6 Q297.6 262.6 300.4 263.8 Z" fill="url(#gya)"/>
<path d="M255.9 244.4 L235.2 260.5 Q257 272 280.7 258.3 Z" fill="#b4ecd2" stroke="#1c7af0" stroke-width="2.1" stroke-linejoin="round"/>
<text x="250.7" y="194.6" font-family="Liberation Sans, sans-serif" font-size="17.6" fill="#1a80ff" stroke="#e6eaff" stroke-width="0.3" textLength="9.7" lengthAdjust="spacingAndGlyphs">Z</text>
<text x="200.6" y="286.9" font-family="Liberation Sans, sans-serif" font-size="16.8" fill="#ff6868" stroke="#ffffff" stroke-width="0.4" textLength="11.8" lengthAdjust="spacingAndGlyphs">X</text>
<text x="306.2" y="282" font-family="Liberation Sans, sans-serif" font-size="15.8" fill="#10c058" stroke="#ffffff" stroke-width="0.4" textLength="10.2" lengthAdjust="spacingAndGlyphs">Y</text>
</g>
<g><line x1="692.2" y1="228" x2="692.2" y2="275" stroke="#1c6cf0" stroke-width="1"/><line x1="683" y1="254" x2="696" y2="262" stroke="#30b050" stroke-width="1"/><line x1="683" y1="266" x2="696" y2="256" stroke="#e05050" stroke-width="1"/><rect x="688.5" y="257.5" width="9" height="7" fill="none" stroke="#000" stroke-width="1"/></g>
</svg>
<div class="panel"></div>
<div class="ui">
<div class="close">x</div>
<div class="tabline"></div>
<div class="tab" style="left:472px;width:44px;"></div>
<div class="tab" style="left:515px;width:44px;"></div>
<div class="ic" style="left:439px;top:73px"><svg width="17" height="16" viewBox="0 0 17 16"><defs><linearGradient id="bo1" x1="0" y1="0" x2="0" y2="1"><stop offset="0" stop-color="#f6f7f8"/><stop offset="1" stop-color="#c4c8cc"/></linearGradient></defs><path d="M2.5 5.5 L2.5 12 L5.5 12" fill="none" stroke="#484848" stroke-width="1"/><path d="M0.5 1.6 L0.5 5.5 L6.5 5.5 L6.5 1.5 L4.4 1.5 L3.8 0.5 L1.3 0.5 Z" fill="url(#bo1)" stroke="#484848" stroke-width="1" stroke-linejoin="round"/><path d="M5.5 8.4 L5.5 15.5 L15.5 15.5 L15.5 9.5 L10.4 9.5 L9.8 7.6 L6.3 7.6 Z" fill="url(#bo1)" stroke="#484848" stroke-width="1" stroke-linejoin="round"/><rect x="10.5" y="11.5" width="3" height="2" fill="#fff" stroke="#484848" stroke-width="1"/></svg></div>
<div class="ic" style="left:462px;top:73px"><svg width="17" height="16" viewBox="0 0 17 16"><defs><linearGradient id="bo1" x1="0" y1="0" x2="0" y2="1"><stop offset="0" stop-color="#f6f7f8"/><stop offset="1" stop-color="#c4c8cc"/></linearGradient></defs><path d="M2.5 5.5 L2.5 12 L5.5 12" fill="none" stroke="#484848" stroke-width="1"/><path d="M0.5 1.6 L0.5 5.5 L6.5 5.5 L6.5 1.5 L4.4 1.5 L3.8 0.5 L1.3 0.5 Z" fill="url(#bo1)" stroke="#484848" stroke-width="1" stroke-linejoin="round"/><path d="M5.5 8.4 L5.5 15.5 L15.5 15.5 L15.5 9.5 L10.4 9.5 L9.8 7.6 L6.3 7.6 Z" fill="url(#bo1)" stroke="#484848" stroke-width="1" stroke-linejoin="round"/><rect x="10.5" y="11.5" width="3" height="2" fill="#ff2020" stroke="#c00000" stroke-width="1"/></svg></div>
<div class="ic" style="left:487px;top:73px"><svg width="12" height="16" viewBox="0 0 12 16"><rect x="0.5" y="0.5" width="4" height="4" fill="#fff" stroke="#444"/><rect x="0.5" y="11.5" width="4" height="4" fill="#fff" stroke="#444"/><path d="M2.5 5 V8" stroke="#444"/><path d="M0.6 7.4 H4.4 L2.5 10 Z" fill="#444"/></svg></div>
<div style="left:493.5px;top:71.5px;font-size:6.5px;color:#555;line-height:8px;">A</div>
<div style="left:493.5px;top:82.5px;font-size:6.5px;color:#555;line-height:8px;">Z</div>
<div class="treebox"></div>
<div class="pm" style="left:445px;top:104px"><i></i></div>
<div class="dh" style="left:455px;top:108px;width:5px"></div>
<div class="ic" style="left:459.7px;top:100.5px"><svg width="17" height="16" viewBox="0 0 17 16"><path d="M1.1 1.5 Q1.1 0.7 2 0.6 L7.6 0.1 Q8.6 0.1 8.6 1 L8.6 7.3 L15.3 9.8 Q15.9 10.1 15.8 10.7 L15.8 12.2 Q15.8 12.8 15.2 13 L10.8 14.6 Q10.3 14.8 9.8 14.6 L1.6 11.5 Q1.1 11.3 1.1 10.8 Z" fill="#e4e8ea" stroke="#3c3c3c" stroke-width="1" stroke-linejoin="round"/>
<path d="M1.6 1.4 L3.8 2.3 L3.8 9.6 L1.6 10.6 Z" fill="#a2aaae"/><path d="M3.8 9.6 L8.4 7.9 L15 10.4 L10.4 12.2 Z" fill="#b6bec2"/><path d="M1.6 10.8 L3.8 9.7 L10.4 12.2 L10.4 14 Z" fill="#9aa2a6"/><path d="M10.4 12.2 L15.2 10.5 L15.2 12.5 L10.4 14.1 Z" fill="#dfe3e5"/><path d="M3.8 2.3 L8 1" stroke="#f6f8f9" stroke-width="0.8"/></svg></div>
<div class="pm" style="left:464px;top:120px"><i></i></div>
<div class="dh" style="left:474px;top:124px;width:5px"></div>
<div class="ic" style="left:478.0px;top:118.0px"><svg width="18" height="13" viewBox="0 0 18 13"><defs><linearGradient id="fo1" x1="0" y1="0" x2="0" y2="1"><stop offset="0" stop-color="#ffffff"/><stop offset="1" stop-color="#cfd3d7"/></linearGradient><linearGradient id="fo2" x1="0" y1="0" x2="0" y2="1"><stop offset="0" stop-color="#bcc0c4"/><stop offset="1" stop-color="#9ca0a4"/></linearGradient></defs><path d="M1.5 11.5 L1.5 1.1 Q1.5 0.5 2.1 0.5 L5.6 0.5 L6.6 1.5 L12.5 1.5 L12.5 4.5 L5 4.5 Z" fill="url(#fo1)" stroke="#3c3c3c" stroke-width="1" stroke-linejoin="round"/><path d="M1.5 11.5 L5 4.5 L16.6 4.5 L12.9 11.5 Z" fill="url(#fo2)" stroke="#3c3c3c" stroke-width="1" stroke-linejoin="round"/></svg></div>
<div class="dh" style="left:487px;top:140px;width:11px"></div>
<div class="ic" style="left:498.0px;top:132.0px"><svg width="17" height="16" viewBox="0 0 17 16"><defs><linearGradient id="bo1" x1="0" y1="0" x2="0" y2="1"><stop offset="0" stop-color="#f6f7f8"/><stop offset="1" stop-color="#c4c8cc"/></linearGradient></defs><path d="M2.5 5.5 L2.5 12 L5.5 12" fill="none" stroke="#484848" stroke-width="1"/><path d="M0.5 1.6 L0.5 5.5 L6.5 5.5 L6.5 1.5 L4.4 1.5 L3.8 0.5 L1.3 0.5 Z" fill="url(#bo1)" stroke="#484848" stroke-width="1" stroke-linejoin="round"/><path d="M5.5 8.4 L5.5 15.5 L15.5 15.5 L15.5 9.5 L10.4 9.5 L9.8 7.6 L6.3 7.6 Z" fill="url(#bo1)" stroke="#484848" stroke-width="1" stroke-linejoin="round"/><rect x="10.5" y="11.5" width="3" height="2" fill="#fff" stroke="#484848" stroke-width="1"/></svg></div>
<div class="dh" style="left:487px;top:156px;width:11px"></div>
<div class="ic" style="left:498.0px;top:148.0px"><svg width="17" height="16" viewBox="0 0 17 16"><defs><linearGradient id="bo1" x1="0" y1="0" x2="0" y2="1"><stop offset="0" stop-color="#f6f7f8"/><stop offset="1" stop-color="#c4c8cc"/></linearGradient></defs><path d="M2.5 5.5 L2.5 12 L5.5 12" fill="none" stroke="#484848" stroke-width="1"/><path d="M0.5 1.6 L0.5 5.5 L6.5 5.5 L6.5 1.5 L4.4 1.5 L3.8 0.5 L1.3 0.5 Z" fill="url(#bo1)" stroke="#484848" stroke-width="1" stroke-linejoin="round"/><path d="M5.5 8.4 L5.5 15.5 L15.5 15.5 L15.5 9.5 L10.4 9.5 L9.8 7.6 L6.3 7.6 Z" fill="url(#bo1)" stroke="#484848" stroke-width="1" stroke-linejoin="round"/><rect x="10.5" y="11.5" width="3" height="2" fill="#fff" stroke="#484848" stroke-width="1"/></svg></div>
<div class="pm" style="left:464px;top:168px"><i></i></div>
<div class="dh" style="left:474px;top:172px;width:5px"></div>
<div class="ic" style="left:478.0px;top:166.0px"><svg width="18" height="13" viewBox="0 0 18 13"><defs><linearGradient id="fo1" x1="0" y1="0" x2="0" y2="1"><stop offset="0" stop-color="#ffffff"/><stop offset="1" stop-color="#cfd3d7"/></linearGradient><linearGradient id="fo2" x1="0" y1="0" x2="0" y2="1"><stop offset="0" stop-color="#bcc0c4"/><stop offset="1" stop-color="#9ca0a4"/></linearGradient></defs><path d="M1.5 11.5 L1.5 1.1 Q1.5 0.5 2.1 0.5 L5.6 0.5 L6.6 1.5 L12.5 1.5 L12.5 4.5 L5 4.5 Z" fill="url(#fo1)" stroke="#3c3c3c" stroke-width="1" stroke-linejoin="round"/><path d="M1.5 11.5 L5 4.5 L16.6 4.5 L12.9 11.5 Z" fill="url(#fo2)" stroke="#3c3c3c" stroke-width="1" stroke-linejoin="round"/></svg></div>
<div class="pm" style="left:483px;top:184px"><i></i></div>
<div class="dh" style="left:493px;top:188px;width:5px"></div>
<div class="ic" style="left:499.0px;top:180.5px"><svg width="14" height="15" viewBox="0 0 14 15"><path d="M4.4 6 L4.4 3.4 Q4.4 1.3 7 1.3 Q9.6 1.3 9.6 3.4 L9.6 6" fill="none" stroke="#6e6e6e" stroke-width="1.7"/><path d="M4.4 6 L4.4 3.4 Q4.4 1.3 7 1.3 Q9.6 1.3 9.6 3.4 L9.6 6" fill="none" stroke="#d0d0d0" stroke-width="0.5"/><rect x="1.4" y="5.4" width="11.2" height="8.6" fill="#d6a446" stroke="#a87818" stroke-width="1"/><path d="M2 7.5 H12 M2 9.5 H12 M2 11.5 H12" stroke="#f2dfa8" stroke-width="1"/></svg></div>
<div class="dh" style="left:506px;top:204px;width:11px"></div>
<div class="ic" style="left:517.0px;top:196.0px"><svg width="17" height="16" viewBox="0 0 17 16"><defs><linearGradient id="bo1" x1="0" y1="0" x2="0" y2="1"><stop offset="0" stop-color="#f6f7f8"/><stop offset="1" stop-color="#c4c8cc"/></linearGradient></defs><path d="M2.5 5.5 L2.5 12 L5.5 12" fill="none" stroke="#484848" stroke-width="1"/><path d="M0.5 1.6 L0.5 5.5 L6.5 5.5 L6.5 1.5 L4.4 1.5 L3.8 0.5 L1.3 0.5 Z" fill="url(#bo1)" stroke="#484848" stroke-width="1" stroke-linejoin="round"/><path d="M5.5 8.4 L5.5 15.5 L15.5 15.5 L15.5 9.5 L10.4 9.5 L9.8 7.6 L6.3 7.6 Z" fill="url(#bo1)" stroke="#484848" stroke-width="1" stroke-linejoin="round"/><rect x="10.5" y="11.5" width="3" height="2" fill="#fff" stroke="#484848" stroke-width="1"/></svg></div>
<div class="pm" style="left:483px;top:216px"><i></i></div>
<div class="dh" style="left:493px;top:220px;width:5px"></div>
<div class="ic" style="left:498.0px;top:212.0px"><svg width="16" height="16" viewBox="0 0 16 16"><circle cx="3" cy="3" r="2.4" fill="#fff" stroke="#e02020" stroke-width="1.2"/><circle cx="13" cy="12.5" r="2.4" fill="#fff" stroke="#e02020" stroke-width="1.2"/><path d="M10.8 10.4 L8 7.8" stroke="#505050" stroke-width="1.1"/><path d="M5.9 5.5 L9.6 6.6 L7 9.2 Z" fill="#505050"/></svg></div>
<div class="dh" style="left:506px;top:236px;width:11px"></div>
<div class="ic" style="left:518.0px;top:228.0px"><svg width="15" height="17" viewBox="0 0 15 17"><path d="M0.5 4.2 L7 0.4 L13.6 4.2 L7 8.5 Z" fill="#fbfbfb" stroke="#bcbec0" stroke-width="0.8" stroke-linejoin="round"/><path d="M0.5 4.2 L7 8.5 L7 15.9 L0.5 12.2 Z" fill="#dde1e4" stroke="#bcbec0" stroke-width="0.8" stroke-linejoin="round"/><path d="M7 8.5 L13.6 4.2 L13.6 12.2 L7 15.9 Z" fill="#8fb3ea" stroke="#3b72ca" stroke-width="1.3" stroke-linejoin="round"/></svg></div>
<div class="dh" style="left:506px;top:252px;width:11px"></div>
<div class="ic" style="left:518.0px;top:244.0px"><svg width="15" height="17" viewBox="0 0 15 17"><path d="M0.5 4.2 L7 0.4 L13.6 4.2 L7 8.5 Z" fill="#fbfbfb" stroke="#bcbec0" stroke-width="0.8" stroke-linejoin="round"/><path d="M0.5 4.2 L7 8.5 L7 15.9 L0.5 12.2 Z" fill="#dde1e4" stroke="#bcbec0" stroke-width="0.8" stroke-linejoin="round"/><path d="M7 8.5 L13.6 4.2 L13.6 12.2 L7 15.9 Z" fill="#8fb3ea" stroke="#3b72ca" stroke-width="1.3" stroke-linejoin="round"/></svg></div>
<div class="dh" style="left:468px;top:268px;width:11px"></div>
<div class="ic" style="left:479.0px;top:263.0px"><svg width="17" height="11" viewBox="0 0 17 11"><defs><linearGradient id="fl1" x1="0" y1="0" x2="1" y2="0"><stop offset="0" stop-color="#8e9296"/><stop offset="0.5" stop-color="#f2f3f4"/><stop offset="1" stop-color="#d4d6d8"/></linearGradient></defs><path d="M0.7 0.7 L12.3 0.7 L15.4 5.7 L15.4 9.2 L4.1 9.2 L0.7 3.8 Z" fill="#f6f6f6" stroke="#343c40" stroke-width="1.2" stroke-linejoin="round"/><path d="M0.7 0.7 L12.3 0.7 L15.4 5.7 L4.1 5.7 Z" fill="url(#fl1)" stroke="#343c40" stroke-width="1.1" stroke-linejoin="round"/><path d="M0.7 0.7 L4.1 5.7 L4.1 9.2 L0.7 3.8 Z" fill="#7c8084"/><path d="M4.1 5.7 L4.1 9.2" stroke="#343c40" stroke-width="1.1"/></svg></div>
<div class="dh" style="left:468px;top:284px;width:11px"></div>
<div class="ic" style="left:479.0px;top:278.0px"><svg width="17" height="9" viewBox="0 0 17 9"><path d="M4.3 0.6 L11.8 0.6 L15.4 4.6 L15.4 7.2 L13.6 7.2 L11 3.2 L5 3.2 L2.6 7.2 L0.7 7.2 L0.7 4.6 Z" fill="#f0f0f0" stroke="#343c40" stroke-width="1.1" stroke-linejoin="round"/><path d="M4.6 1.9 L11.6 1.9" stroke="#b8bcc0" stroke-width="0.9"/></svg></div>
<div class="dv" style="left:468px;top:114px;height:6px"></div>
<div class="dv" style="left:468px;top:130px;height:38px"></div>
<div class="dv" style="left:468px;top:178px;height:107px"></div>
<div class="dv" style="left:487px;top:132px;height:25px"></div>
<div class="dv" style="left:487px;top:180px;height:4px"></div>
<div class="dv" style="left:487px;top:194px;height:22px"></div>
<div class="dv" style="left:506px;top:196px;height:9px"></div>
<div class="dv" style="left:506px;top:228px;height:25px"></div>
<div class="selbg"></div>
<div class="split"></div>
<div class="propbox"></div>
<div class="pbox"><i></i></div>
<div class="hdrbg"></div>
<div class="hl" style="top:358px"></div><div class="hl" style="top:376px"></div><div class="hl" style="top:394px"></div>
<div class="vl" style="left:453px"></div><div class="vl" style="left:514px"></div>
<div id="title" class="t t12" style="left:436.50px;top:22px;letter-spacing:-0.104px">Mechanical Browser</div>
<div id="tabm" class="t t11" style="left:434.00px;top:45px;letter-spacing:-0.270px">Model</div>
<div id="tabl" class="t t11" style="left:475.75px;top:47px;letter-spacing:-0.030px">Library</div>
<div id="tabr" class="t t11" style="left:520.50px;top:47px;letter-spacing:0.324px">Report</div>
<div id="r0" class="t t11 b" style="left:483.25px;top:100px;letter-spacing:0.660px">MyFormFeature</div>
<div id="r1" class="t t11" style="left:498.25px;top:116px;letter-spacing:-0.288px">Bodies</div>
<div id="r2" class="t t11" style="left:517.25px;top:132px;letter-spacing:0.252px">Body_2</div>
<div id="r3" class="t t11" style="left:517.25px;top:148px;letter-spacing:-0.036px">Body_1</div>
<div id="r4" class="t t11" style="left:498.75px;top:164px;letter-spacing:0.072px">Constraints</div>
<div id="r5" class="t t11" style="left:517.75px;top:180px;letter-spacing:-0.045px">Fix_1</div>
<div id="r6" class="t t11" style="left:536.75px;top:196px;letter-spacing:-0.216px">Region</div>
<div id="r7" class="t t11 w" style="left:518.25px;top:212px;letter-spacing:-0.050px">Coincident_2</div>
<div id="r8" class="t t11" style="left:536.75px;top:228px;letter-spacing:-0.288px">Planar Face</div>
<div id="r9" class="t t11" style="left:536.75px;top:244px;letter-spacing:-0.288px">Planar Face</div>
<div id="r10" class="t t11 dis" style="left:498.75px;top:260px;letter-spacing:-0.027px">Flange_1</div>
<div id="r11" class="t t11 dis" style="left:498.75px;top:276px;letter-spacing:-0.108px">Form_1</div>
<div id="hdr" class="t t11 b w" style="left:456.75px;top:324px;letter-spacing:0.480px">Constraint</div>
<div id="pt" class="t t11" style="left:457.25px;top:342px;letter-spacing:0.180px">Type</div>
<div id="pn" class="t t11" style="left:456.25px;top:360px;letter-spacing:-0.420px">Name</div>
<div id="pe" class="t t11" style="left:456.25px;top:378px;letter-spacing:-0.180px">Enabled</div>
<div id="vt" class="t t11 gr" style="left:517.75px;top:342px;letter-spacing:-0.080px">Coincident</div>
<div id="vn" class="t t11" style="left:517.75px;top:360px;letter-spacing:-0.082px">Coincident_2</div>
<div id="ve" class="t t11" style="left:517.75px;top:378px;letter-spacing:0.000px">Yes</div>
<div id="st" class="t t11" style="left:439.75px;top:458px;letter-spacing:0.044px">Satisfied</div>
</div>
</body></html>
